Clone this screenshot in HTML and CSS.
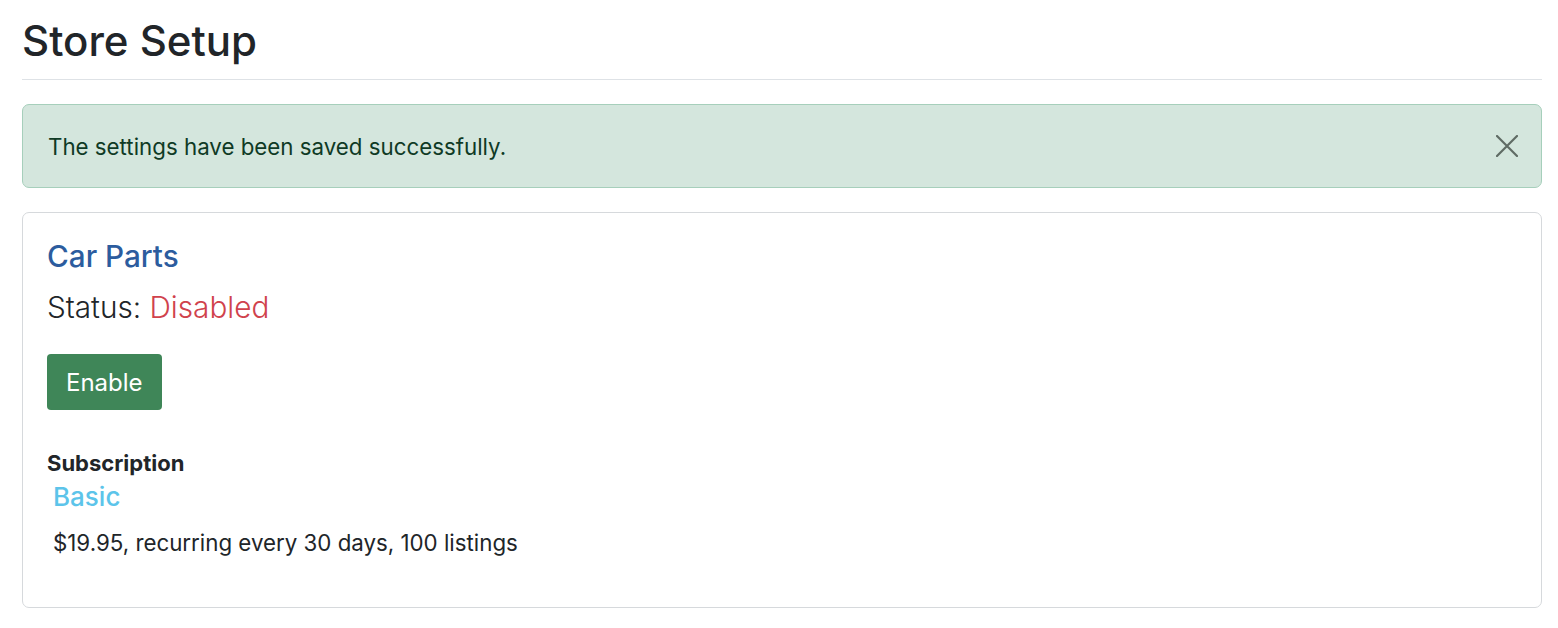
FILE: index.html
```html
<!DOCTYPE html>
<html lang="en">
<head>
<meta charset="utf-8">
<title>Store Setup</title>
<link rel="stylesheet" href="styles.css">
</head>
<body>
<div class="page">
  <h1 class="page-title">Store Setup</h1>
  <hr class="divider">
  <div class="alert">
    <span class="alert-text">The settings have been saved successfully.</span>
    <button class="alert-close" aria-label="Close">
      <svg width="22" height="22" viewBox="0 0 22 22"><path d="M1 1L21 21M21 1L1 21" stroke="#5f6b64" stroke-width="2.2" stroke-linecap="round" fill="none"/></svg>
    </button>
  </div>
  <div class="card">
    <h2 class="store-name">Car Parts</h2>
    <p class="status">Status: <span class="status-off">Disabled</span></p>
    <div><button class="btn-enable">Enable</button></div>
    <div class="sub-label">Subscription</div>
    <div class="plan-name">Basic</div>
    <div class="plan-desc">$19.95, recurring every 30 days, 100 listings</div>
  </div>
</div>
</body>
</html>
```

FILE: styles.css
```css
* { box-sizing: border-box; }
html, body { margin: 0; padding: 0; background: #fff; }
body {
  font-family: Inter, "Noto Sans", "Liberation Sans", sans-serif;
  color: #212529;
  font-size: 22.3px;
}
.page {
  padding: 0 16px 0 22px;
}
.page-title {
  margin: 0;
  padding-top: 16px;
  font-size: 42px;
  font-weight: 500;
  line-height: 50px;
}
.divider {
  margin: 13px 0 24px 0;
  border: 0;
  border-top: 1px solid #dee2e6;
}
.alert {
  display: flex;
  align-items: center;
  justify-content: space-between;
  height: 84px;
  padding: 0 23px 0 25px;
  background: #d4e6dd;
  border: 1px solid #a6cfbb;
  border-radius: 7px;
  color: #0f3a25;
  font-size: 22.3px;
}
.alert-close {
  background: none;
  border: 0;
  padding: 0;
  width: 22px;
  height: 22px;
  display: flex;
}
.card {
  margin-top: 24px;
  border: 1px solid #d6d9dc;
  border-radius: 7px;
  padding: 26px 24px 0 24px;
  height: 396px;
}
.store-name {
  margin: 0;
  font-size: 29.7px;
  font-weight: 500;
  color: #2c5c9e;
  line-height: 1.2;
}
.status {
  margin: 15px 0 0 0;
  font-size: 29.7px;
  font-weight: 300;
  line-height: 1.2;
}
.status-off { color: #d0424c; }
.btn-enable {
  margin-top: 29px;
  height: 56px;
  padding: 0 19px;
  font-family: inherit;
  font-size: 24px;
  color: #fff;
  background: #3f8658;
  border: 0;
  border-radius: 4px;
  display: block;
}
.sub-label {
  margin-top: 40px;
  font-weight: 700;
  font-size: 22px;
  line-height: 1.2;
}
.plan-name {
  margin: 4px 0 0 6px;
  font-size: 26px;
  font-weight: 500;
  color: #5cc4ea;
  line-height: 1.2;
}
.plan-desc {
  margin: 18px 0 0 6px;
  font-size: 22.3px;
  line-height: 1.2;
}
```
